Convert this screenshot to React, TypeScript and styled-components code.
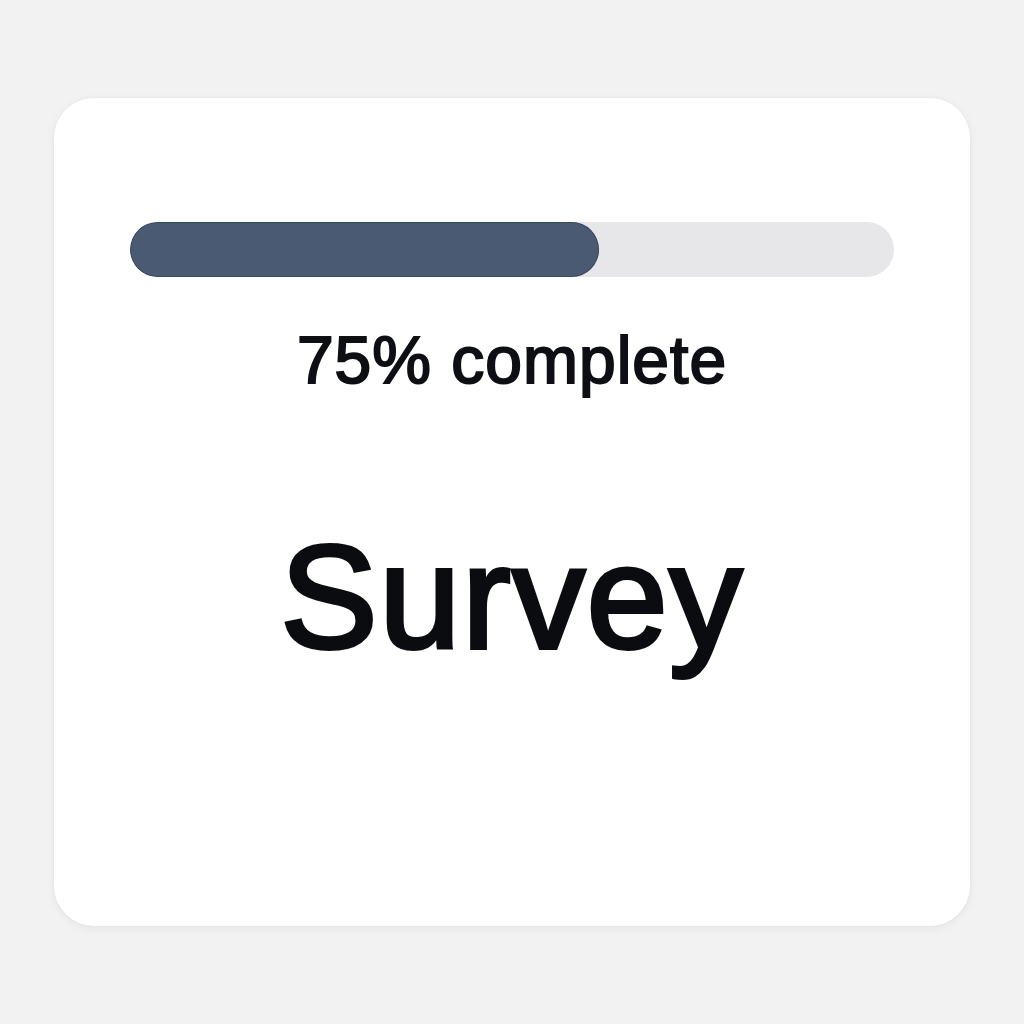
import React from "react";
import styled, { createGlobalStyle } from "styled-components";

const Global = createGlobalStyle`
  html, body { margin: 0; padding: 0; background: #f2f2f2; }
  body { font-family: "Liberation Sans", Arial, Helvetica, sans-serif; }
`;

const Page = styled.div`
  width: 1024px;
  height: 1024px;
  display: flex;
  align-items: center;
  justify-content: center;
`;

const Card = styled.div`
  width: 916px;
  height: 828px;
  box-sizing: border-box;
  background: #ffffff;
  border-radius: 40px;
  box-shadow: 0 2px 10px rgba(0, 0, 0, 0.06), 0 0 0 1px rgba(0, 0, 0, 0.015);
  padding: 124px 76px 0;
  display: flex;
  flex-direction: column;
  align-items: center;
`;

const Track = styled.div`
  width: 100%;
  height: 55px;
  border-radius: 28px;
  background: #e7e7e9;
  overflow: hidden;
  display: flex;
`;

const Fill = styled.div`
  height: 100%;
  background: #4a5a72;
  border-radius: 28px;
  box-shadow: inset 0 0 0 1px rgba(40, 55, 80, 0.5);
`;

const Label = styled.div`
  margin-top: 50px;
  font-size: 66px;
  line-height: 1;
  font-weight: 400;
  -webkit-text-stroke: 2px #0d0f14;
  color: #0d0f14;
  letter-spacing: 1px;
`;

const Title = styled.h1`
  margin: 132px 0 0;
  font-size: 146px;
  line-height: 1;
  font-weight: 400;
  -webkit-text-stroke: 4px #0a0c10;
  color: #0a0c10;
  letter-spacing: 1.5px;
`;

export default function App() {
  const fillPct = 61.4;
  return (
    <>
      <Global />
      <Page>
        <Card>
          <Track>
            <Fill style={{ width: `${fillPct}%` }} />
          </Track>
          <Label>75% complete</Label>
          <Title>Survey</Title>
        </Card>
      </Page>
    </>
  );
}
